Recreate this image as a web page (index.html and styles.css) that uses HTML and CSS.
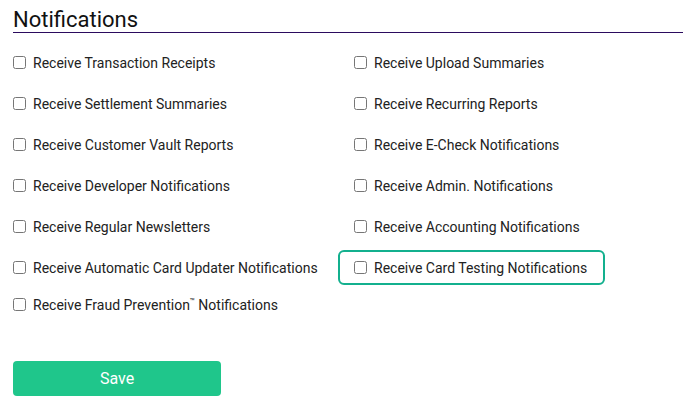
FILE: index.html
```html
<!DOCTYPE html>
<html lang="en">
<head>
<meta charset="UTF-8">
<title>Notifications</title>
<link rel="stylesheet" href="styles.css">
</head>
<body>

<div class="wrap">
    <h2 class="section-title">Notifications</h2>

    <div class="options">
        <label class="option"><input type="checkbox"><span>Receive Transaction Receipts</span></label>
        <label class="option right"><input type="checkbox"><span>Receive Upload Summaries</span></label>

        <label class="option"><input type="checkbox"><span>Receive Settlement Summaries</span></label>
        <label class="option right"><input type="checkbox"><span>Receive Recurring Reports</span></label>

        <label class="option"><input type="checkbox"><span>Receive Customer Vault Reports</span></label>
        <label class="option right"><input type="checkbox"><span>Receive E-Check Notifications</span></label>

        <label class="option"><input type="checkbox"><span>Receive Developer Notifications</span></label>
        <label class="option right"><input type="checkbox"><span>Receive Admin. Notifications</span></label>

        <label class="option"><input type="checkbox"><span>Receive Regular Newsletters</span></label>
        <label class="option right"><input type="checkbox"><span>Receive Accounting Notifications</span></label>

        <label class="option"><input type="checkbox"><span>Receive Automatic Card Updater Notifications</span></label>
        <div class="option right">
            <label class="highlight"><input type="checkbox"><span>Receive Card Testing Notifications</span></label>
        </div>

        <label class="option"><input type="checkbox"><span>Receive Fraud Prevention<sup class="tm">™</sup> Notifications</span></label>
    </div>

    <button class="save-btn">Save</button>
</div>

</body>
</html>
```

FILE: styles.css
```css
body {
    margin: 0;
    padding: 0;
    background: #fff;
    color: #222;
    font-family: Roboto, "Liberation Sans", sans-serif;
}

.wrap {
    padding: 0 7px 0 13px;
}

.section-title {
    margin: 8px 0 0;
    font-size: 22px;
    font-weight: 400;
    line-height: 24px;
    color: #111;
    border-bottom: 1px solid #2b0b5e;
}

.options {
    display: grid;
    grid-template-columns: 325px 1fr;
    grid-template-rows: repeat(6, 41px) 33px;
    margin-top: 9px;
}

.option {
    display: flex;
    align-items: center;
    gap: 7px;
    font-size: 14px;
    line-height: 18px;
    cursor: pointer;
}

.option.right {
    padding-left: 16px;
}

.option input,
.highlight input {
    margin: 0;
    width: 13px;
    height: 13px;
}

.highlight {
    display: inline-flex;
    align-items: center;
    gap: 7px;
    height: 35px;
    box-sizing: border-box;
    margin-left: -16px;
    padding: 0 16px 0 14px;
    border: 2px solid #13b08e;
    border-radius: 6px;
    cursor: pointer;
}

.tm {
    font-size: 8px;
    line-height: 0;
    vertical-align: 6px;
}

.save-btn {
    display: block;
    margin-top: 40px;
    width: 208px;
    height: 35px;
    border: none;
    border-radius: 4px;
    background: #1fc68b;
    color: #fff;
    font-family: inherit;
    font-size: 16px;
    cursor: pointer;
}
```
